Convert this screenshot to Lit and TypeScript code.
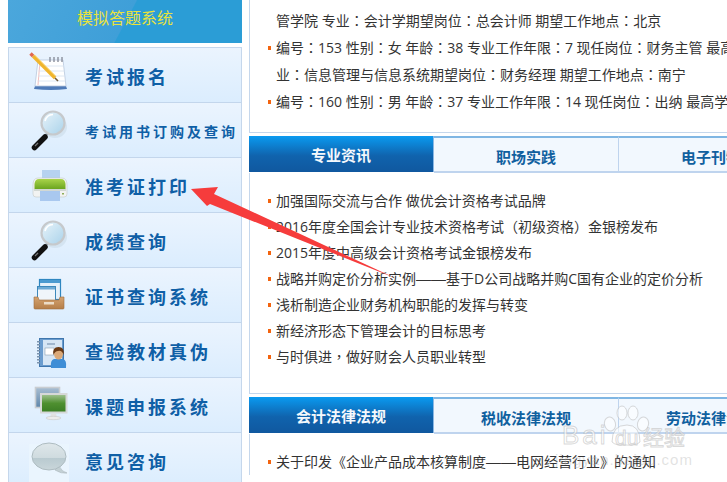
import { LitElement, html, css, svg } from "lit";
import { customElement } from "lit/decorators.js";

const defs = svg`<defs>
<linearGradient id="lens" x1="0" y1="0" x2="1" y2="1"><stop offset="0" stop-color="#e9f4fa"/><stop offset="1" stop-color="#a9d2ea"/></linearGradient>
<linearGradient id="green" x1="0" y1="0" x2="0" y2="1"><stop offset="0" stop-color="#a9d44a"/><stop offset="1" stop-color="#6ba51f"/></linearGradient>
<linearGradient id="screen" x1="0" y1="0" x2="0" y2="1"><stop offset="0" stop-color="#a5c596"/><stop offset=".5" stop-color="#4f9030"/><stop offset="1" stop-color="#3a7c24"/></linearGradient>
<linearGradient id="back" x1="0" y1="0" x2="0" y2="1"><stop offset="0" stop-color="#a9bed2"/><stop offset="1" stop-color="#5e86ab"/></linearGradient>
<linearGradient id="bubble" x1="0" y1="0" x2="0" y2="1"><stop offset="0" stop-color="#dfe7ea"/><stop offset=".55" stop-color="#cfdbdf"/><stop offset=".56" stop-color="#b9cad0"/><stop offset="1" stop-color="#c9d6da"/></linearGradient>
<linearGradient id="tray" x1="0" y1="0" x2="0" y2="1"><stop offset="0" stop-color="#d4a370"/><stop offset="1" stop-color="#b57e48"/></linearGradient>
</defs>`;

const magnifier = svg`
<ellipse cx="46" cy="24" rx="12" ry="11" fill="#c4d4e2" opacity=".45"/>
<path d="M37 32 L42 27" stroke="#8d9aa3" stroke-width="2.4"/>
<path d="M25.5 44.5 L36 34" stroke="#111" stroke-width="5.5" stroke-linecap="round"/>
<path d="M26 43 L29 40" stroke="#777" stroke-width="1.2"/>
<circle cx="44" cy="20" r="11.5" fill="url(#lens)" stroke="#c6c9cc" stroke-width="2.2"/>
<path d="M36 18 A8.5 8.5 0 0 1 44 11.5" stroke="#fff" stroke-width="1.6" fill="none"/>`;

const icons = [
  svg`<path d="M26 38 H57 L58 41 Q42 43 25 41 Z" fill="#4f7bb8"/>
    <path d="M29 12 H54 L57 38 H26 Z" fill="#fff" stroke="#b7c6dc" stroke-width=".8"/>
    <path d="M31 13 L29 37" stroke="#eba3a3" stroke-width=".7"/>
    <path d="M30 18 H55 M29.5 23 H55.5 M29 28 H56 M28.5 33 H56.5" stroke="#d6e2f0" stroke-width=".8"/>
    <path d="M41 9 V14 M45 9 V14 M49 9 V14 M53 9 V14" stroke="#8a8f9c" stroke-width="1.4"/>
    <path d="M24 8 L46 30" stroke="#f0b52c" stroke-width="3.4"/>
    <path d="M25.5 6.8 L47 28.3" stroke="#f9d776" stroke-width=".9"/>
    <path d="M21.5 5.5 L24 8" stroke="#e0674f" stroke-width="3.4"/>
    <path d="M46 30 L49 33" stroke="#6f5a3e" stroke-width="1.6"/>`,
  magnifier,
  svg`<rect x="33" y="12" width="18" height="12" fill="#b6d2f0"/>
    <path d="M24 27 Q24 20 29 20 H53 Q58 20 58 27 V36 Q58 39 55 39 H27 Q24 39 24 36 Z" fill="#f2f3f2" stroke="#c4c9c8" stroke-width=".6"/>
    <path d="M25.5 26 Q26 21 30 21 H52 Q56 21 56.5 26 V31 H25.5 Z" fill="url(#green)"/>
    <rect x="25" y="31" width="32" height="2" fill="#d2d8d4"/>
    <rect x="31" y="33" width="20" height="10" fill="#a9c8ef"/>
    <rect x="53" y="35" width="2" height="1.5" fill="#8fae5a"/>`,
  magnifier,
  svg`<rect x="30.5" y="11.5" width="21" height="20" fill="#e4f0fa" stroke="#2f86c0" stroke-width="1.2"/>
    <rect x="31" y="12" width="20" height="3" fill="#4b9ad0"/>
    <rect x="28.5" y="18.5" width="18" height="14" fill="#f0f5fa" stroke="#3c88bb"/>
    <rect x="29" y="19" width="17" height="2.5" fill="#6daad5"/>
    <path d="M25 29 H29 L30 32 H50 L51 29 H55 V40 Q55 41 54 41 H26 Q25 41 25 40 Z" fill="url(#tray)" stroke="#a06b3c" stroke-width=".6"/>
    <rect x="35" y="34" width="10" height="2.5" fill="#ecdcc6"/>`,
  svg`<rect x="30.5" y="15.5" width="24" height="28" fill="#6a9cce" stroke="#3f76ad"/>
    <rect x="34" y="17" width="19" height="25" fill="#d6e6f5"/>
    <path d="M29.5 18 V41" stroke="#7b93ad" stroke-width="3" stroke-dasharray="1.5 1.5"/>
    <path d="M38 21 H46" stroke="#6b87a6" stroke-width="1"/>
    <rect x="36" y="25" width="9" height="7" fill="#fff" stroke="#7a8ea3" stroke-width=".5"/>
    <path d="M42 45 Q41 37 45 36 H54 Q58 37 57 45 Z" fill="#3f8ed6"/>
    <ellipse cx="49.5" cy="31" rx="4.5" ry="5.5" fill="#dba978"/>
    <path d="M44.5 32 Q43 24 49.5 24 Q56 24 54.5 32 Q53 27 49 28 Q46 28 44.5 32Z" fill="#6a3a14"/>`,
  svg`<rect x="26.5" y="9.5" width="24" height="20" fill="url(#back)" stroke="#c9cdd1" stroke-width="1.6"/>
    <rect x="32" y="16" width="25.5" height="18.5" fill="url(#screen)" stroke="#d6d8d8" stroke-width="2"/>
    <path d="M42 35.5 H47 L48 39 H41 Z" fill="#e2e2e2"/>
    <ellipse cx="44.5" cy="40" rx="7.5" ry="1.7" fill="#ececec" stroke="#c0c0c0" stroke-width=".5"/>`,
  svg`<rect x="20" y="11" width="40" height="38" fill="#eaf5fe"/>
    <path d="M50 33 Q53 39 58 40 Q52 41 46 37 Z" fill="#c3d0d4" stroke="#a8b4b8" stroke-width=".6"/>
    <ellipse cx="40" cy="23.5" rx="17" ry="13.5" fill="url(#bubble)" stroke="#aebcc1"/>`,
];

const menu: [string, boolean][] = [
  ["考试报名", false],
  ["考试用书订购及查询", true],
  ["准考证打印", false],
  ["成绩查询", false],
  ["证书查询系统", false],
  ["查验教材真伪", false],
  ["课题申报系统", false],
  ["意见咨询", false],
];

const jobs = [
  [false, "管学院 专业：会计学期望岗位：总会计师 期望工作地点：北京"],
  [true, "编号：153 性别：女 年龄：38 专业工作年限：7 现任岗位：财务主管 最高学历：本科 专"],
  [false, "业：信息管理与信息系统期望岗位：财务经理 期望工作地点：南宁"],
  [true, "编号：160 性别：男 年龄：37 专业工作年限：14 现任岗位：出纳 最高学历：本科 专业"],
] as [boolean, string][];

const news = [
  "加强国际交流与合作 做优会计资格考试品牌",
  "2016年度全国会计专业技术资格考试（初级资格）金银榜发布",
  "2015年度中高级会计资格考试金银榜发布",
  "战略并购定价分析实例——基于D公司战略并购C国有企业的定价分析",
  "浅析制造企业财务机构职能的发挥与转变",
  "新经济形态下管理会计的目标思考",
  "与时俱进，做好财会人员职业转型",
];

/* The reference centres full-width punctuation and draws wider dashes. */
function text(t: string) {
  return t.split(/(：|，|（|）|——)/).map((part) => {
    if (part === "——") return html`<span class="dash">${part}</span>`;
    if (/^[：，（）]$/.test(part)) return html`<span class="punct">${part}</span>`;
    return part;
  });
}

@customElement("app-root")
export class AppRoot extends LitElement {
  static styles = css`
    :host {
      display: block;
      position: relative;
      width: 727px;
      height: 482px;
      overflow: hidden;
      background: #fff;
      font-family: "Noto Sans CJK SC", "Liberation Sans", sans-serif;
    }
    .page { display: flex; gap: 7px; padding-left: 8px; height: 482px; overflow: hidden; }
    .side { width: 234px; flex: none; display: flex; flex-direction: column; gap: 4px; }
    .head {
      height: 43px; box-sizing: border-box; padding-bottom: 9px;
      display: flex; align-items: center; justify-content: center;
      background: linear-gradient(118deg, #4ba7dc 0, #3f9fd8 50%, #2b9dd6 50.5%, #2b9dd6 100%);
      color: #e9e23c; font-size: 16px; line-height: 34px;
    }
    .menu { border: 1px solid #c5d7ec; border-width: 1px 1px 0; }
    .item {
      height: 55px; box-sizing: border-box; border-bottom: 1px solid #c3d6ec;
      background: linear-gradient(#ebf4fe, #dbedfe);
      display: flex; align-items: center;
      color: #0f5fa6; font-weight: 700; font-size: 18px; letter-spacing: 3px;
    }
    .item svg { width: 76px; height: 54px; flex: none; display: block; }
    .item span { line-height: 54px; white-space: nowrap; position: relative; top: 1px; }
    .item.small { font-size: 14px; }
    .main { flex: 1; min-width: 0; display: flex; flex-direction: column; }
    .panel {
      width: 520px; box-sizing: border-box; border-left: 1px solid #c5d7ec; border-bottom: 1px solid #c5d7ec;
      font-family: "Open Sans", "Noto Sans CJK SC", sans-serif;
      font-size: 14px; color: #333; padding-left: 26px;
    }
    .top { height: 133px; padding-top: 7px; line-height: 27px; margin-bottom: 3px; }
    .news { height: 221px; padding-top: 15px; line-height: 26px; margin-bottom: 3px; }
    .low { border-bottom: 0; padding-top: 15px; line-height: 26px; }
    .row { white-space: nowrap; position: relative; }
    .row.bullet::before {
      content: ""; position: absolute; left: -8px; top: 50%; margin-top: -2px;
      width: 3px; height: 4px; background: #f3640f;
    }
    .punct { font-family: "Noto Sans CJK TC", sans-serif; line-height: 0; }
    .dash { font-family: "Liberation Sans", sans-serif; font-size: 15px; line-height: 0; }
    .tabs { display: flex; height: 37px; width: 560px; flex: none; }
    .tab {
      width: 185px; flex: none; box-sizing: border-box; text-align: center;
      font-size: 15px; font-weight: 700; color: #10609f; line-height: 38px;
      background: #f2f8fe;
      border-top: 2px solid #7fb6e3; border-bottom: 2px solid #bfd4ee; border-right: 1px solid #bfd4ee;
    }
    .tab.on {
      border: 0; height: 36px; line-height: 37px; color: #f4f8fc; width: 185px;
      background: linear-gradient(#0a9af0, #1063ad 55%, #10589f);
      border-right: 1px solid #8bb8e4;
    }
    .arrow { position: absolute; left: 0; top: 0; pointer-events: none; }
    .mark { position: absolute; left: 550px; top: 400px; width: 177px; height: 82px; pointer-events: none; }
    .mark svg { position: absolute; left: 0; top: 0; }
    .mark span { position: absolute; white-space: nowrap; }
    .bai { left: 12px; top: 21px; font: 26px/28px "Liberation Sans", sans-serif; letter-spacing: 3px; color: rgba(255,255,255,.7); -webkit-text-stroke: 1px rgba(170,170,170,.45); }
    .du { left: 65px; top: 27px; font: 21px/22px "Liberation Sans", sans-serif; color: rgba(255,255,255,.7); -webkit-text-stroke: 1px rgba(170,170,170,.45); }
    .jy { left: 93px; top: 23px; font: 21px/26px "Noto Sans CJK SC", sans-serif; color: rgba(255,255,255,.7); -webkit-text-stroke: 1px rgba(170,170,170,.45); }
    .url { left: 5px; top: 51px; font: 15px/18px "Liberation Sans", sans-serif; color: rgba(170,170,170,.35); letter-spacing: 1px; }
  `;

  private tabs(names: string[]) {
    return html`<div class="tabs">${names.map((n, i) => html`<div class="tab ${i === 0 ? "on" : ""}">${n}</div>`)}</div>`;
  }

  render() {
    return html`
      <div class="page">
        <div class="side">
          <div class="head">模拟答题系统</div>
          <div class="menu">
            ${menu.map(([t, small], i) => html`
              <div class="item ${small ? "small" : ""}">
                <svg viewBox="0 0 76 54" fill="none">${i === 0 ? defs : ""}${icons[i]}</svg>
                <span>${t}</span>
              </div>`)}
          </div>
        </div>
        <div class="main">
          <div class="panel top">
            ${jobs.map(([b, t]) => html`<div class="row ${b ? "bullet" : ""}">${text(t)}</div>`)}
          </div>
          ${this.tabs(["专业资讯", "职场实践", "电子刊物"])}
          <div class="panel news">
            ${news.map((t) => html`<div class="row bullet">${text(t)}</div>`)}
          </div>
          ${this.tabs(["会计法律法规", "税收法律法规", "劳动法律法规"])}
          <div class="panel low">
            <div class="row bullet">${text("关于印发《企业产品成本核算制度——电网经营行业》的通知")}</div>
          </div>
        </div>
      </div>
      <svg class="arrow" width="727" height="482" viewBox="0 0 727 482">
        <path d="M191 189 L218 187 L214 194 L395 278 L210 204 L207 206 Z" fill="#f63c3c"/>
      </svg>
      <div class="mark">
        <svg width="177" height="82" viewBox="0 0 177 82" fill="rgba(255,255,255,.55)" stroke="rgba(170,170,170,.45)">
          <ellipse cx="60" cy="24" rx="5.5" ry="7" transform="rotate(-15 60 24)"/>
          <ellipse cx="72" cy="13" rx="5" ry="7"/>
          <ellipse cx="83" cy="13" rx="5" ry="7"/>
          <ellipse cx="93" cy="24" rx="5.5" ry="7" transform="rotate(15 93 24)"/>
          <path d="M62 42 Q62 25 77 25 Q90 25 90 42 Q86 46 76 45 Q66 46 62 42 Z"/>
        </svg>
        <span class="bai">Bai</span>
        <span class="du">du</span>
        <span class="jy">经验</span>
        <span class="url">jingyan.baidu.com</span>
      </div>
    `;
  }
}
